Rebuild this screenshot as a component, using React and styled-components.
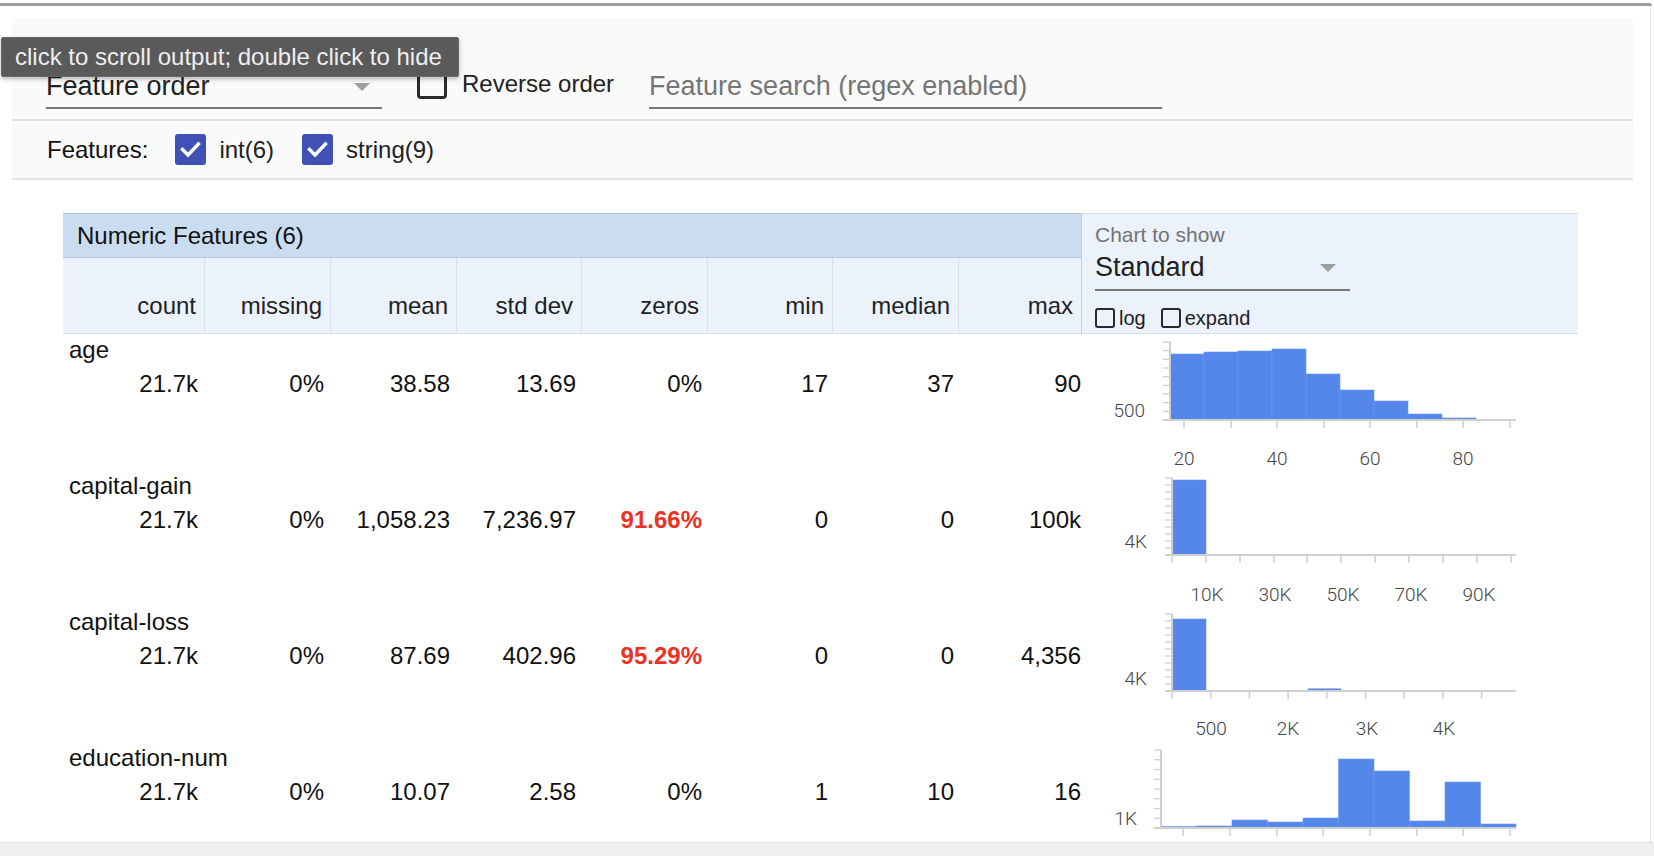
import React from "react";
import styled, { createGlobalStyle } from "styled-components";

const Global = createGlobalStyle`
  html, body { margin: 0; padding: 0; background: #fff; overflow: hidden; }
  body { font-family: "Liberation Sans", Arial, Helvetica, sans-serif; color: #111; }
  * { box-sizing: border-box; }
`;

const Page = styled.div`
  position: relative;
  width: 1654px;
  height: 856px;
  display: flex;
  flex-direction: column;
`;

const TopRule = styled.div`
  height: 3px;
  margin-top: 3px;
  width: 1652px;
  background: #9c9c9c;
  border-top-right-radius: 3px;
  flex: none;
`;

const Output = styled.div`
  position: relative;
  flex: 1;
  width: 1651px;
  border-right: 1px solid #e4e4e4;
  overflow: hidden;
`;

const BottomBand = styled.div`
  flex: none;
  height: 14px;
  background: #efefef;
  border-top: 1px solid #e2e2e2;
`;

const Toolbar = styled.div`
  margin: 12px 0 0 12px;
  width: 1621px;
  background: #fafafa;
`;

const ToolbarRow = styled.div`
  display: flex;
  align-items: ${(p) => p.$align};
  height: ${(p) => p.$h}px;
  padding: ${(p) => p.$pad};
  border-bottom: 2px solid #e2e2e2;
`;

const Select = styled.div`
  position: relative;
  width: ${(p) => p.$w}px;
  height: ${(p) => p.$h}px;
  margin-top: ${(p) => p.$mt || 0}px;
  font-size: 27px;
  line-height: 32px;
  color: #212121;
  border-bottom: 2px solid #777;
  flex: none;
`;

const Arrow = styled.span`
  position: absolute;
  right: ${(p) => p.$right}px;
  top: ${(p) => p.$top}px;
  width: 0;
  height: 0;
  border-left: 8px solid transparent;
  border-right: 8px solid transparent;
  border-top: 8px solid #9e9e9e;
`;

const CheckLabel = styled.label`
  display: flex;
  align-items: center;
  gap: ${(p) => p.$gap}px;
  margin-left: ${(p) => p.$ml}px;
  margin-bottom: ${(p) => p.$mb || 0}px;
  font-size: ${(p) => p.$fs}px;
  line-height: 28px;
  color: #212121;
  flex: none;
`;

const EmptyBox = styled.span`
  display: inline-block;
  width: ${(p) => p.$size}px;
  height: ${(p) => p.$size}px;
  border: ${(p) => p.$bw}px solid #2a2a2a;
  border-radius: ${(p) => p.$r}px;
  flex: none;
`;

const CheckedBox = styled.span`
  display: inline-flex;
  align-items: center;
  justify-content: center;
  width: 31px;
  height: 31px;
  background: #3f51b5;
  border-radius: 3px;
  flex: none;
`;

const SearchInput = styled.input`
  margin-left: 35px;
  width: 513px;
  height: 39px;
  border: none;
  border-bottom: 2px solid #777;
  background: transparent;
  padding: 0 0 5px 0;
  font-family: "Liberation Sans", Arial, sans-serif;
  font-size: 27px;
  line-height: 32px;
  color: #212121;
  outline: none;
  &::placeholder { color: #757575; opacity: 1; }
`;

const FeaturesLabel = styled.span`
  font-size: 24px;
  margin-right: 27px;
`;

const Tooltip = styled.div`
  position: absolute;
  top: 31px;
  left: 1px;
  width: 458px;
  height: 40px;
  background: #5a5a5a;
  border: 1px solid #6a6a6a;
  border-radius: 2px;
  box-shadow: 0 2px 5px rgba(0, 0, 0, 0.28);
  color: #eeeeee;
  font-size: 24px;
  line-height: 38px;
  padding-left: 13px;
  white-space: nowrap;
  z-index: 5;
`;

const Table = styled.div`
  margin: 33px 0 0 63px;
  width: 1515px;
`;

const TableHead = styled.div`
  display: flex;
  height: 121px;
`;

const LeftHead = styled.div`
  width: 1018px;
  display: flex;
  flex-direction: column;
`;

const TitleBar = styled.div`
  height: 45px;
  background: #c9dcf0;
  border-top: 1px solid #b4c8e1;
  border-bottom: 1px solid #b6cae3;
  padding-left: 14px;
  font-size: 24px;
  line-height: 43px;
  color: #111;
`;

const ColumnHeads = styled.div`
  flex: 1;
  display: grid;
  grid-template-columns: 142px 126px 126px 125px 126px 125px 126px 122px;
  background: #ebf2fb;
  border-bottom: 1px solid #d8e2ee;
`;

const HeadCell = styled.div`
  display: flex;
  align-items: flex-end;
  justify-content: flex-end;
  padding: 0 8px 13px 0;
  font-size: 24px;
  line-height: 28px;
  color: #222;
  border-right: ${(p) => (p.$last ? "none" : "1px solid #d6e0ec")};
`;

const ChartControls = styled.div`
  width: 497px;
  background: #ebf2fb;
  border-left: 1px solid #bccfe6;
  border-top: 1px solid #d3deeb;
  border-bottom: 1px solid #d8e2ee;
  padding: 9px 0 0 13px;
`;

const ChartLabel = styled.div`
  font-size: 21px;
  line-height: 24px;
  color: #737373;
`;

const ChartCheckRow = styled.div`
  display: flex;
  align-items: center;
  margin-top: 13px;
`;

const Row = styled.div`
  display: grid;
  grid-template-columns: 1025px 490px;
  height: 136px;
`;

const Stats = styled.div`
  display: flex;
  flex-direction: column;
`;

const FeatureName = styled.div`
  font-size: 24px;
  line-height: 28px;
  padding: 2px 0 0 6px;
  color: #111;
`;

const Values = styled.div`
  display: grid;
  grid-template-columns: 142px repeat(6, 126px) 127px;
  margin-top: 6px;
`;

const Value = styled.div`
  text-align: right;
  padding-right: 7px;
  font-size: 24px;
  line-height: 28px;
  color: ${(p) => (p.$warn ? "#ec3223" : "#111")};
  font-weight: ${(p) => (p.$warn ? 700 : 400)};
`;

const ChartSvg = styled.svg`
  display: block;
  overflow: visible;
`;

const AXIS = "#cfcfcf";
const BAR = "#5586ea";

function Histogram({ c }) {
  const yTicks = [];
  const step = (c.base - c.top) / (c.nY - 1);
  for (let i = 0; i < c.nY; i++) {
    const y = c.top + i * step;
    yTicks.push(<line key={"y" + i} x1={c.ax - 7} x2={c.ax} y1={y} y2={y} stroke={AXIS} strokeWidth="1.3" />);
  }
  return (
    <ChartSvg width="490" height="136" viewBox="4 0 490 136">
      {c.bars.map(([x, w, t], i) => (
        <rect key={"b" + i} x={x} y={t} width={w} height={Math.max(c.base - t, 0.6)} fill={BAR} stroke="#6d98ee" strokeWidth="0.6" />
      ))}
      {yTicks}
      <line x1={c.ax} x2={c.ax} y1={c.top} y2={c.base} stroke={AXIS} strokeWidth="2" />
      <line x1={c.ax - 7} x2={432} y1={c.base} y2={c.base} stroke={AXIS} strokeWidth="2" />
      {c.xTicks.map((x, i) => (
        <line key={"x" + i} x1={x} x2={x} y1={c.base} y2={c.base + 8} stroke={AXIS} strokeWidth="1.5" />
      ))}
      <text x={c.yLabel[0]} y={c.yLabel[1]} textAnchor="end" fontFamily="Roboto, 'Liberation Sans', sans-serif" fontWeight="300" fontSize="19" fill="#444">
        {c.yLabel[2]}
      </text>
      {c.xLabels.map(([x, t]) => (
        <text key={t} x={x} y={c.labelY} textAnchor="middle" fontFamily="Roboto, 'Liberation Sans', sans-serif" fontWeight="300" fontSize="19" fill="#444">
          {t}
        </text>
      ))}
    </ChartSvg>
  );
}

const mk = (x0, w, tops) => tops.map((t, i) => [x0 + i * w, w, t]);

const rows = [
  {
    name: "age",
    values: ["21.7k", "0%", "38.58", "13.69", "0%", "17", "37", "90"],
    warn: false,
    chart: {
      ax: 86, top: 8, base: 86, nY: 10,
      yLabel: [61, 83, "500"],
      bars: mk(86, 34, [20, 18, 17, 15, 40, 56, 67, 80, 84]),
      xTicks: [100, 147, 193, 240, 286, 333, 379, 426],
      xLabels: [[100, "20"], [193, "40"], [286, "60"], [379, "80"]],
      labelY: 131,
    },
  },
  {
    name: "capital-gain",
    values: ["21.7k", "0%", "1,058.23", "7,236.97", "91.66%", "0", "0", "100k"],
    warn: true,
    chart: {
      ax: 88, top: 8, base: 85, nY: 12,
      yLabel: [63, 78, "4K"],
      bars: [[88, 34, 10], ...mk(122, 34, [84.6, 85, 85, 85, 85, 85, 85, 85, 85])],
      xTicks: [88, 122, 156, 190, 223, 257, 291, 325, 359, 393, 427],
      xLabels: [[123, "10K"], [191, "30K"], [259, "50K"], [327, "70K"], [395, "90K"]],
      labelY: 131,
    },
  },
  {
    name: "capital-loss",
    values: ["21.7k", "0%", "87.69", "402.96", "95.29%", "0", "0", "4,356"],
    warn: true,
    chart: {
      ax: 88, top: 8, base: 85, nY: 12,
      yLabel: [63, 79, "4K"],
      bars: [[88, 34, 13], [189, 15, 84.4], [224, 33, 82.8]],
      xTicks: [88, 126.7, 165.4, 204.1, 242.8, 281.5, 320.2, 358.9, 397.6],
      xLabels: [[127, "500"], [204, "2K"], [283, "3K"], [360, "4K"]],
      labelY: 129,
    },
  },
  {
    name: "education-num",
    values: ["21.7k", "0%", "10.07", "2.58", "0%", "1", "10", "16"],
    warn: false,
    chart: {
      ax: 77, top: 8, base: 86, nY: 9,
      yLabel: [53, 83, "1K"],
      bars: mk(77, 35.5, [84.5, 84, 78, 80, 76, 17, 29, 79, 40, 82]),
      xTicks: [99, 146, 193, 239, 286, 333, 379, 426],
      xLabels: [],
      labelY: 131,
    },
  },
];

const heads = ["count", "missing", "mean", "std dev", "zeros", "min", "median", "max"];

const Check = () => (
  <svg width="31" height="31" viewBox="0 0 31 31">
    <path d="M7.5 15.5 L13 21 L23.5 10" fill="none" stroke="#fff" strokeWidth="3.4" strokeLinecap="square" />
  </svg>
);

export default function App() {
  return (
    <Page>
      <Global />
      <TopRule />
      <Output>
        <Tooltip>click to scroll output; double click to hide</Tooltip>
        <Toolbar>
          <ToolbarRow $align="flex-end" $h={103} $pad="0 0 10px 34px">
            <Select $w={336} $h={39}>
              Feature order
              <Arrow $right={12} $top={13} />
            </Select>
            <CheckLabel $gap={15} $ml={35} $mb={10} $fs={24}>
              <EmptyBox $size={30} $bw={3} $r={4} />
              Reverse order
            </CheckLabel>
            <SearchInput placeholder="Feature search (regex enabled)" readOnly />
          </ToolbarRow>
          <ToolbarRow $align="center" $h={59} $pad="0 0 0 35px">
            <FeaturesLabel>Features:</FeaturesLabel>
            <CheckLabel $gap={13} $ml={0} $fs={24}>
              <CheckedBox><Check /></CheckedBox>
              int(6)
            </CheckLabel>
            <CheckLabel $gap={13} $ml={28} $fs={24}>
              <CheckedBox><Check /></CheckedBox>
              string(9)
            </CheckLabel>
          </ToolbarRow>
        </Toolbar>

        <Table>
          <TableHead>
            <LeftHead>
              <TitleBar>Numeric Features (6)</TitleBar>
              <ColumnHeads>
                {heads.map((h, i) => (
                  <HeadCell key={h} $last={i === heads.length - 1}>{h}</HeadCell>
                ))}
              </ColumnHeads>
            </LeftHead>
            <ChartControls>
              <ChartLabel>Chart to show</ChartLabel>
              <Select $w={255} $h={40} $mt={4}>
                Standard
                <Arrow $right={14} $top={13} />
              </Select>
              <ChartCheckRow>
                <CheckLabel $gap={4} $ml={0} $fs={20}>
                  <EmptyBox $size={20} $bw={2.5} $r={3} />
                  log
                </CheckLabel>
                <CheckLabel $gap={4} $ml={15} $fs={20}>
                  <EmptyBox $size={20} $bw={2.5} $r={3} />
                  expand
                </CheckLabel>
              </ChartCheckRow>
            </ChartControls>
          </TableHead>
          {rows.map((r) => (
            <Row key={r.name}>
              <Stats>
                <FeatureName>{r.name}</FeatureName>
                <Values>
                  {r.values.map((v, i) => (
                    <Value key={i} $warn={r.warn && i === 4}>{v}</Value>
                  ))}
                </Values>
              </Stats>
              <Histogram c={r.chart} />
            </Row>
          ))}
        </Table>
      </Output>
      <BottomBand />
    </Page>
  );
}
